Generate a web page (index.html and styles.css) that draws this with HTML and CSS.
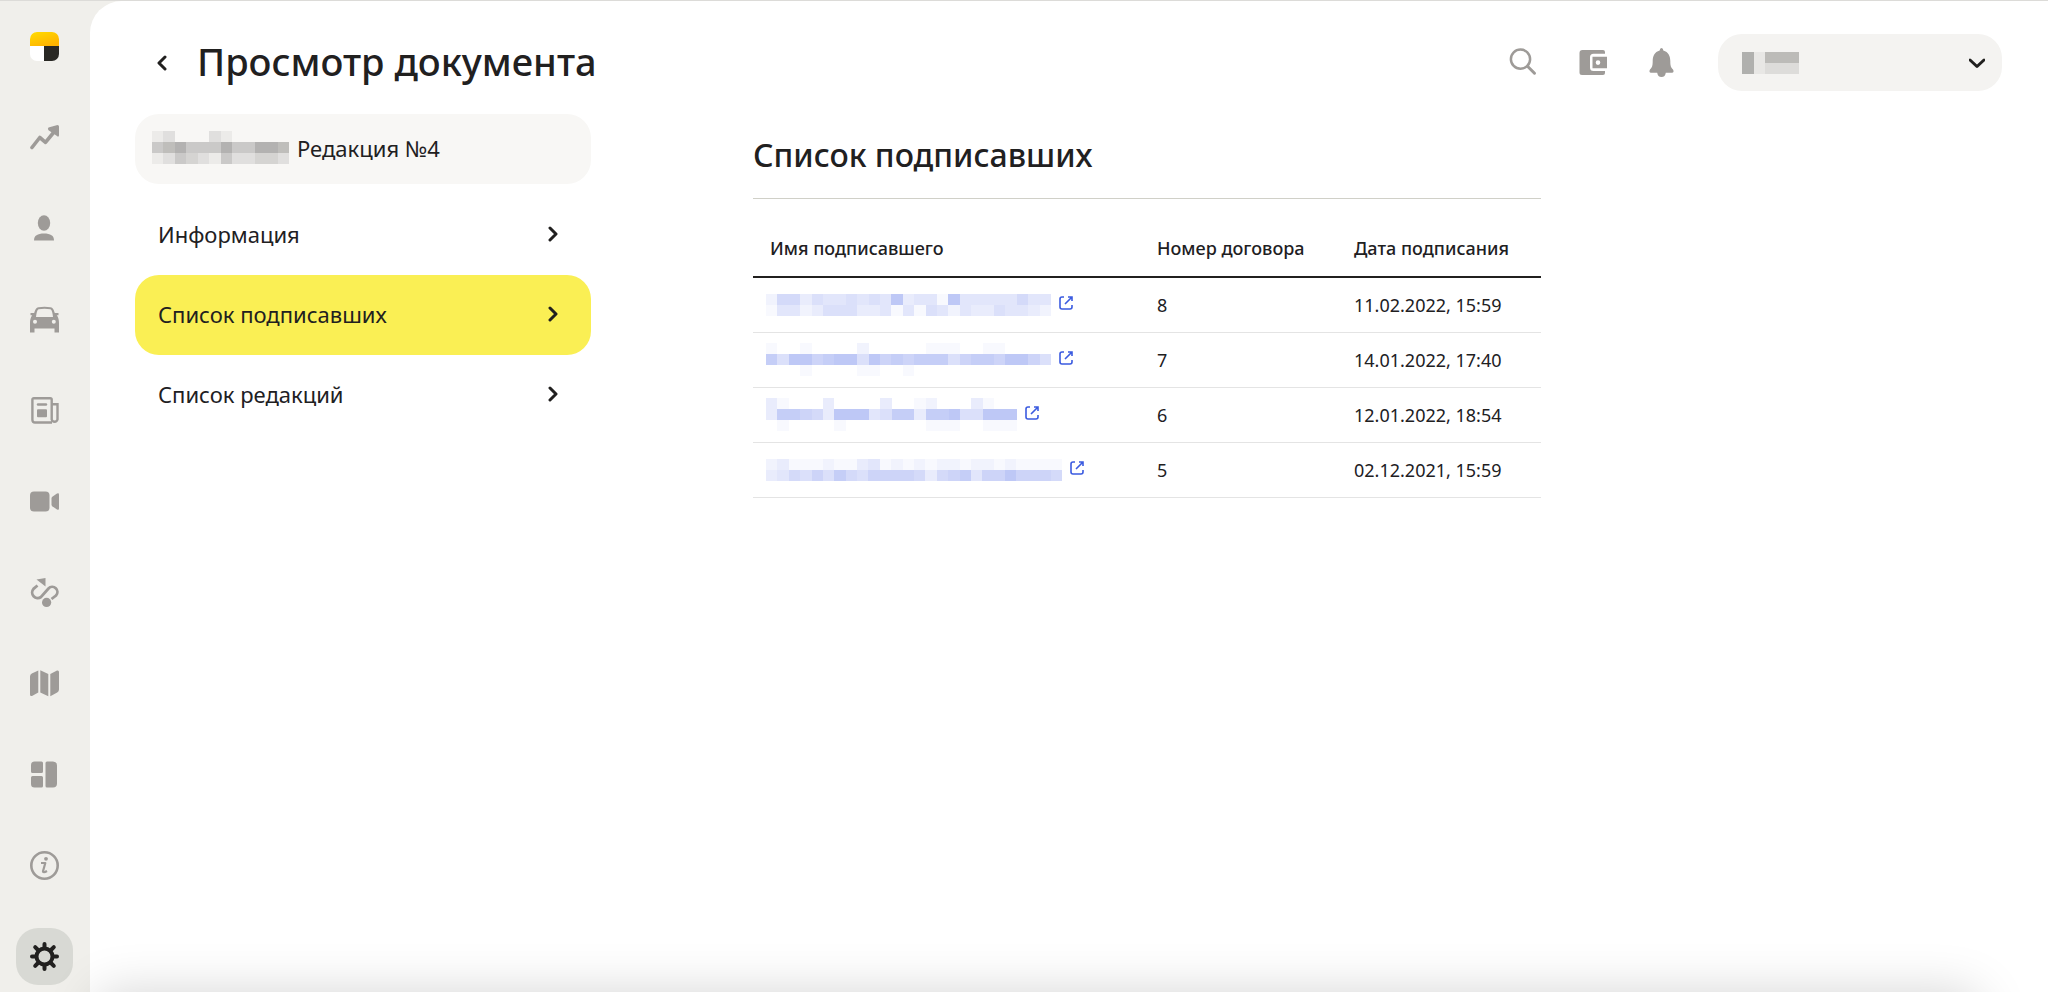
FILE: index.html
```
<!DOCTYPE html>
<html lang="ru">
<head>
<meta charset="utf-8">
<meta name="viewport" content="width=device-width, initial-scale=1">
<title>Просмотр документа</title>
<link rel="stylesheet" href="styles.css">
</head>
<body>
<div class="app">
  <nav class="rail" aria-label="Разделы">
    <a class="rail-item" href="#" aria-label="Главная">
      <svg class="icon-29" viewBox="0 0 29 29">
        <defs>
          <linearGradient id="sun" x1="0" y1="0" x2="0.6" y2="1"><stop offset="0" stop-color="#ffdc00"/><stop offset="1" stop-color="#ffb300"/></linearGradient>
          <clipPath id="tile"><rect width="29" height="29" rx="7"/></clipPath>
        </defs>
        <g clip-path="url(#tile)">
          <rect width="29" height="29" fill="#fff"/>
          <rect width="29" height="14" fill="url(#sun)"/>
          <rect x="14" y="14" width="15" height="15" fill="#292824"/>
        </g>
      </svg>
    </a>
    <a class="rail-item" href="#" aria-label="Статистика">
      <svg class="icon-29" viewBox="0 0 29 29"><path d="M2 24.500 9.800 14.500 15.500 19.300 24 9" fill="none" stroke="currentColor" stroke-width="3.600" stroke-linecap="round" stroke-linejoin="round"/><path d="M18.500 4.500 27.500 2Q29 2 29 3.500V12.500Q28.500 14.500 27 13L18.500 7.300Q17.300 5.500 18.500 4.500Z" fill="currentColor"/></svg>
    </a>
    <a class="rail-item" href="#" aria-label="Водители">
      <svg class="icon-29" viewBox="0 0 29 29" fill="currentColor"><ellipse cx="14" cy="9" rx="6.200" ry="7.800"/><path d="M4 26.500C4 21.500 7.500 19.500 14 19.500S24 21.500 24 26.500Z"/></svg>
    </a>
    <a class="rail-item" href="#" aria-label="Автомобили">
      <svg class="icon-29" viewBox="0 0 29 29" fill="currentColor"><path fill-rule="evenodd" d="M8.500 2.200Q14.500 1.200 20.500 2.200C23.500 2.800 24 5.500 24.800 8H28.500V10.200H26.800C28.500 12.500 29 15 29 18V27.500H24.500V23.500H4.500V27.500H0V18C0 15 .5 12.500 2.200 10.200H.5V8H4.200C5 5.500 5.500 2.800 8.500 2.200ZM8.500 4.200C7 5 6.500 8 6 12H23C22.500 8 22 5 20.500 4.200Q14.500 3.300 8.500 4.200ZM5 14.700A2 2 0 1 0 5 18.700A2 2 0 1 0 5 14.700ZM23.800 14.700A2 2 0 1 0 23.800 18.700A2 2 0 1 0 23.800 14.700Z"/></svg>
    </a>
    <a class="rail-item" href="#" aria-label="Новости">
      <svg class="icon-29" viewBox="0 0 29 29" fill="none" stroke="currentColor" stroke-width="2.400"><path d="M22 26.500H5A2.600 2.600 0 0 1 2.400 24V3.600A1.400 1.400 0 0 1 3.800 2.200H20.300A1.400 1.400 0 0 1 21.700 3.600V23.500A3 3 0 0 0 27.500 23.500V8.300H22"/><path d="M8 8.500H16" stroke-linecap="round"/><rect x="7" y="13.200" width="10" height="8" rx="1" fill="currentColor" stroke="none"/></svg>
    </a>
    <a class="rail-item" href="#" aria-label="Видео">
      <svg class="icon-29" viewBox="0 0 29 29" fill="currentColor"><rect y="4.500" width="19.500" height="20" rx="4"/><path d="M21.500 11.500Q21.500 10.500 22.300 9.700L27 6.500Q29 5.500 29 7.500V21.500Q29 23.500 27 22.500L22.300 19.300Q21.500 18.500 21.500 17.500Z"/></svg>
    </a>
    <a class="rail-item" href="#" aria-label="Маршруты">
      <svg class="icon-29" viewBox="0 0 29 29"><path d="M7.500 7.500 3.500 10.800A5.600 5.600 0 0 0 11 19L18.500 10.500A5 5 0 0 1 26 17.500L21.500 21" fill="none" stroke="currentColor" stroke-width="2.800"/><path d="M6.500 1.500 15.500 0V8.500Z" fill="currentColor"/><circle cx="16.600" cy="24.400" r="4.600" fill="currentColor"/></svg>
    </a>
    <a class="rail-item" href="#" aria-label="Карта">
      <svg class="icon-29" viewBox="0 0 29 29" fill="currentColor"><path d="M0 7.500Q0 5.500 1.800 4.500L8.300 1.500V23.500L2 27Q0 27.500 0 25.500ZM10.300 1.200 18.300 5V27.200L10.300 23.500ZM20.300 5 27 1.500Q29 1 29 3V20.500Q29 22.500 27.200 23.500L20.300 27.200Z"/></svg>
    </a>
    <a class="rail-item" href="#" aria-label="Виджеты">
      <svg class="icon-29" viewBox="0 0 29 29" fill="currentColor"><path d="M4.500 1.500H11.500A1.500 1.500 0 0 1 13 3V11.500A1.500 1.500 0 0 1 11.500 13H2.500A1.500 1.500 0 0 1 1 11.500V5A3.500 3.500 0 0 1 4.500 1.500ZM2.500 16H11.500A1.500 1.500 0 0 1 13 17.500V26A1.500 1.500 0 0 1 11.500 27.500H4.500A3.500 3.500 0 0 1 1 24V17.500A1.500 1.500 0 0 1 2.500 16ZM17 1.500H23A4 4 0 0 1 27 5.500V23.500A4 4 0 0 1 23 27.500H17A1.500 1.500 0 0 1 15.500 26V3A1.500 1.500 0 0 1 17 1.500Z"/></svg>
    </a>
    <a class="rail-item" href="#" aria-label="Справка">
      <svg class="icon-29" viewBox="0 0 29 29"><circle cx="14.500" cy="14.500" r="13.200" fill="none" stroke="currentColor" stroke-width="2.600"/><circle cx="16" cy="7.800" r="1.900" fill="currentColor"/><path d="M11 12H15.300L13 20.300Q13 22.300 17 20" fill="none" stroke="currentColor" stroke-width="2.200" stroke-linejoin="round"/></svg>
    </a>
    <a class="rail-item rail-item-active" href="#" aria-label="Настройки" aria-current="page">
      <svg class="icon-29" viewBox="0 0 29 29"><circle cx="14.500" cy="14.500" r="8" fill="none" stroke="currentColor" stroke-width="4"/><g stroke="currentColor" stroke-width="4" stroke-linecap="round"><path d="M14.500 2V6M14.500 23V27M2 14.500H6M23 14.500H27M5.200 5.200 8 8M21 21 23.800 23.800M5.200 23.800 8 21M21 8 23.800 5.200"/></g></svg>
    </a>
  </nav>

  <div class="panel">
    <header class="topbar">
      <button class="back" type="button" aria-label="Назад">
        <svg class="chevron" viewBox="0 0 16 16"><path d="M11 2 5 8 11 14"/></svg>
      </button>
      <h1 class="page-title">Просмотр документа</h1>
      <div class="tools">
        <button class="tool" type="button" aria-label="Поиск">
          <svg class="icon-29" viewBox="0 0 29 29" fill="none" stroke="currentColor"><circle cx="11.500" cy="11.200" r="9.600" stroke-width="2.500"/><path d="M18.500 18.200 25.500 25.200" stroke-width="3" stroke-linecap="round"/></svg>
        </button>
        <button class="tool" type="button" aria-label="Кошелёк">
          <svg class="icon-29" viewBox="-1 0 29 29" fill="currentColor"><path d="M3.500 2H24A2 2 0 0 1 26 4V5.800H14.500A3.500 3.500 0 0 0 11 9.300V19.500A3.500 3.500 0 0 0 14.500 23H26V25A2 2 0 0 1 24 27H3A2.500 2.500 0 0 1 .500 24.500V5A3 3 0 0 1 3.500 2Z"/><path fill-rule="evenodd" d="M13.500 8.800H28V20.200H13.500ZM19 12.300A2.300 2.300 0 1 0 19 16.900A2.300 2.300 0 1 0 19 12.300Z"/></svg>
        </button>
        <button class="tool" type="button" aria-label="Уведомления">
          <svg class="icon-29" viewBox="0 0 29 29" fill="currentColor"><path d="M14.500 0Q16.300 0 16.300 2.500C21.500 4 23.300 8 23.300 13C23.300 18 24 19.500 26 21.500Q27.500 24.500 25 24.800H18.800Q18.300 29 14.500 29T10.200 24.800H4Q1.500 24.500 3 21.500C5 19.500 5.700 18 5.700 13C5.700 8 7.500 4 12.700 2.500Q12.700 0 14.500 0Z"/></svg>
        </button>
      </div>
      <button class="account" type="button" aria-label="Аккаунт">
        <svg class="mosaic" data-rows="061555 061222" data-tone="grey"></svg>
        <svg class="chevron chevron-down" viewBox="0 0 16 16"><path d="M1 5 8 11.500 15 5"/></svg>
      </button>
    </header>

    <div class="columns">
      <aside class="side">
        <div class="doc-card">
          <svg class="mosaic" data-rows="120002100000 456444644665 124321422332" data-tone="grey"></svg>
          <span>Редакция №4</span>
        </div>
        <nav class="menu" aria-label="Документ">
          <a class="menu-item" href="#">Информация <svg class="chevron" viewBox="0 0 16 16"><path d="M5 2 11 8 5 14"/></svg></a>
          <a class="menu-item menu-item-active" href="#" aria-current="page">Список подписавших <svg class="chevron" viewBox="0 0 16 16"><path d="M5 2 11 8 5 14"/></svg></a>
          <a class="menu-item" href="#">Список редакций <svg class="chevron" viewBox="0 0 16 16"><path d="M5 2 11 8 5 14"/></svg></a>
        </nav>
      </aside>

      <main class="content">
        <h2 class="section-title">Список подписавших</h2>
        <table class="signers">
          <thead>
            <tr><th class="col-name" scope="col">Имя подписавшего</th><th class="col-number" scope="col">Номер договора</th><th scope="col">Дата подписания</th></tr>
          </thead>
          <tbody>
            <tr>
              <td class="name"><a class="signer" href="#" aria-label="Подписавший"><svg class="mosaic" data-rows="2663544545493441944444644 1442355533414154243354432"></svg><svg class="open" viewBox="0 0 14 14"><path d="M5 1H3A2 2 0 0 0 1 3V11A2 2 0 0 0 3 13H11A2 2 0 0 0 13 11V9M9 1H13V5M13 1 6 8"/></svg></a></td>
              <td>8</td><td>11.02.2022, 15:59</td>
            </tr>
            <tr>
              <td class="name"><a class="signer" href="#" aria-label="Подписавший"><svg class="mosaic" data-rows="1001000020000011100110000 8599789959787888578879975 0001000011001000000000000"></svg><svg class="open" viewBox="0 0 14 14"><path d="M5 1H3A2 2 0 0 0 1 3V11A2 2 0 0 0 3 13H11A2 2 0 0 0 13 11V9M9 1H13V5M13 1 6 8"/></svg></a></td>
              <td>7</td><td>14.01.2022, 17:40</td>
            </tr>
            <tr>
              <td class="name"><a class="signer" href="#" aria-label="Подписавший"><svg class="mosaic" data-rows="3100030000300120003100 3887639994588388955999 0100001000000011100111"></svg><svg class="open" viewBox="0 0 14 14"><path d="M5 1H3A2 2 0 0 0 1 3V11A2 2 0 0 0 3 13H11A2 2 0 0 0 13 11V9M9 1H13V5M13 1 6 8"/></svg></a></td>
              <td>6</td><td>12.01.2022, 18:54</td>
            </tr>
            <tr>
              <td class="name"><a class="signer" href="#" aria-label="Подписавший"><svg class="mosaic" data-rows="23111211341212122122121111 34657586577776367847797776"></svg><svg class="open" viewBox="0 0 14 14"><path d="M5 1H3A2 2 0 0 0 1 3V11A2 2 0 0 0 3 13H11A2 2 0 0 0 13 11V9M9 1H13V5M13 1 6 8"/></svg></a></td>
              <td>5</td><td>02.12.2021, 15:59</td>
            </tr>
          </tbody>
        </table>
      </main>
    </div>
  </div>
</div>
<div class="bottom-shade"></div>
<script src="script.js"></script>
</body>
</html>
```
FILE: styles.css
```
* {
  box-sizing: border-box;
}

body {
  margin: 0;
  background: #f0efeb;
  color: #21201f;
  font-family: "Noto Sans", "Open Sans", sans-serif;
  font-size: 22px;
  line-height: 28px;
}

a {
  color: inherit;
  text-decoration: none;
}

button {
  border: 0;
  padding: 0;
  background: none;
  color: inherit;
  font: inherit;
  cursor: pointer;
}

svg {
  display: block;
  flex: none;
}

.app {
  display: flex;
  min-height: 100vh;
  border-top: 1px solid #dcdbd8;
}

.rail {
  display: flex;
  flex: none;
  flex-direction: column;
  align-items: center;
  gap: 34px;
  width: 90px;
  padding: 17px 2px 7px 0;
  color: #9e9b98;
}

.rail-item {
  display: flex;
  align-items: center;
  justify-content: center;
  width: 57px;
  height: 57px;
  border-radius: 22px;
}

.rail-item-active {
  background: #d8d9d4;
  color: #21201f;
}

.icon-29 {
  width: 29px;
  height: 29px;
}

.panel {
  flex: 1;
  min-width: 0;
  padding: 33px 46px 40px 45px;
  border-top-left-radius: 32px;
  background: #fff;
}

.topbar {
  display: flex;
  align-items: center;
  height: 57px;
}

.back {
  padding: 8px 19px;
}

.chevron {
  width: 16px;
  height: 16px;
  fill: none;
  stroke: currentColor;
  stroke-width: 3;
  stroke-linecap: round;
  stroke-linejoin: round;
}

.page-title {
  margin: 0 auto 0 8px;
  padding-bottom: 3px;
  font-size: 38px;
  font-weight: 500;
  line-height: 48px;
}

.tools {
  display: flex;
  gap: 40px;
  margin-right: 42px;
  color: #9e9b98;
}

.account {
  display: flex;
  align-items: center;
  justify-content: space-between;
  width: 284px;
  padding: 17px;
  padding-left: 13px;
  height: 57px;
  border-radius: 24px;
  background: #f4f3f1;
}

.columns {
  display: flex;
  align-items: flex-start;
  gap: 162px;
  padding-top: 23px;
}

.side {
  flex: none;
  width: 456px;
}

.doc-card {
  display: flex;
  align-items: center;
  gap: 8px;
  min-height: 70px;
  padding: 15px 17px 18px;
  border-radius: 24px;
  background: #f8f7f5;
}

.menu {
  margin-top: 11px;
}

.menu-item {
  display: flex;
  align-items: center;
  justify-content: space-between;
  min-height: 80px;
  padding: 0 30px 2px 23px;
  border-radius: 24px;
}

.menu-item-active {
  background: #faef54;
}

.content {
  flex: 1;
  max-width: 788px;
  padding-top: 20px;
}

.section-title {
  margin: 0;
  padding-bottom: 22px;
  border-bottom: 1px solid #d0d0c8;
  font-size: 32px;
  font-weight: 500;
  line-height: 42px;
}

.signers {
  width: 100%;
  margin-top: 22px;
  border-collapse: collapse;
  font-size: 18px;
  line-height: 24px;
}

.signers th {
  height: 56px;
  padding: 0 0 1px 17px;
  border-bottom: 2px solid #21201f;
  font-weight: 500;
  text-align: left;
}

.signers .col-name {
  width: 387px;
}

.signers .col-number {
  width: 197px;
}

.signers td {
  height: 55px;
  padding: 0 0 0 17px;
  border-bottom: 1px solid #e4e4e4;
}

.signers .name {
  padding-left: 13px;
}

.signer {
  display: flex;
  align-items: center;
  gap: 8px;
  color: #3b5be0;
}

.open {
  width: 14px;
  height: 14px;
  margin-bottom: 4px;
  fill: none;
  stroke: currentColor;
  stroke-width: 1.6;
}

.bottom-shade {
  position: fixed;
  top: 100%;
  right: 68px;
  left: 95px;
  height: 100px;
  border-radius: 20px;
  box-shadow: 0 0 50px rgba(0, 0, 0, 0.17);
  pointer-events: none;
}
```
FILE: script.js
```
// Draws hidden names as a grid of tinted cells, one digit of strength per cell.
const CELL_WIDTH = 11.4;
const CELL_HEIGHT = 11;
const TONES = {
  blue: { color: "#4a66e6", step: 0.04 },
  grey: { color: "#21201f", step: 0.053 },
};

document.querySelectorAll(".mosaic").forEach((svg) => {
  const rows = svg.dataset.rows.split(" ");
  const tone = TONES[svg.dataset.tone || "blue"];
  svg.setAttribute("viewBox", `0 0 ${rows[0].length} ${rows.length}`);
  svg.setAttribute("preserveAspectRatio", "none");
  svg.setAttribute("width", Math.round(rows[0].length * CELL_WIDTH));
  svg.setAttribute("height", rows.length * CELL_HEIGHT);
  svg.setAttribute("shape-rendering", "crispEdges");
  rows.forEach((row, y) => {
    [...row].forEach((level, x) => {
      const cell = document.createElementNS("http://www.w3.org/2000/svg", "rect");
      cell.setAttribute("x", x);
      cell.setAttribute("y", y);
      cell.setAttribute("width", 1);
      cell.setAttribute("height", 1);
      cell.setAttribute("fill", tone.color);
      cell.setAttribute("fill-opacity", level * tone.step);
      svg.append(cell);
    });
  });
});
```
